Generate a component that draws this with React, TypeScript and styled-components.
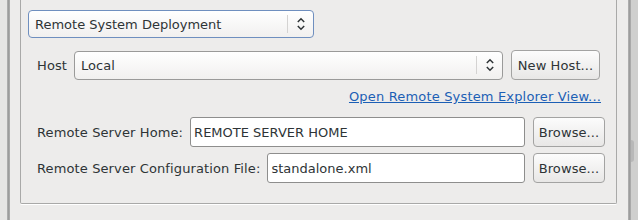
import styled, { createGlobalStyle } from "styled-components";

const GlobalStyle = createGlobalStyle`
  html, body {
    margin: 0;
    padding: 0;
    background: #edeceb;
  }
  body {
    font-family: "DejaVu Sans", "Liberation Sans", sans-serif;
    font-size: 13px;
    color: #2e3436;
  }
`;

const Chevron = () => (
  <svg width="10" height="14" viewBox="0 0 10 14">
    <path d="M1.8 5 L5 1.8 L8.2 5 M1.8 9 L5 12.2 L8.2 9" fill="none" stroke="#2e3436" strokeWidth="1.5" />
  </svg>
);

const App = () => {
  return (
    <>
      <GlobalStyle />
      <Window>
        <LeftEdge />
        <Bar />
        <Main>
          <GroupBox>
            <ModeCombo>
              <ComboText>Remote System Deployment</ComboText>
              <ComboArrow>
                <Chevron />
              </ComboArrow>
            </ModeCombo>
            <Section>
              <HostRow>
                <Label>Host</Label>
                <HostCombo>
                  <ComboText>Local</ComboText>
                  <ComboArrow>
                    <Chevron />
                  </ComboArrow>
                </HostCombo>
                <Button $width={89}>New Host...</Button>
              </HostRow>
              <LinkRow>
                <Link href="#">Open Remote System Explorer View...</Link>
              </LinkRow>
              <FieldRow>
                <Label>Remote Server Home:</Label>
                <Field>REMOTE SERVER HOME</Field>
                <Button $width={72}>Browse...</Button>
              </FieldRow>
              <FieldRow>
                <Label>Remote Server Configuration File:</Label>
                <Field>standalone.xml</Field>
                <Button $width={72}>Browse...</Button>
              </FieldRow>
            </Section>
          </GroupBox>
        </Main>
        <Bar />
        <RightEdge>
          <Slider />
        </RightEdge>
      </Window>
    </>
  );
};

const Window = styled.div`
  display: flex;
  width: 638px;
  height: 220px;
  overflow: hidden;
`;

const LeftEdge = styled.div`
  width: 7px;
  background: #e6e5e4;
`;

const Bar = styled.div`
  width: 3px;
  background: linear-gradient(to right, #b4b4b4, #9c9c9c, #b0b0b0);
`;

const RightEdge = styled.div`
  display: flex;
  flex-direction: column;
  flex: 1;
  background: #cfcfce;
`;

const Slider = styled.div`
  margin-top: 140px;
  height: 22px;
  width: 3px;
  border-radius: 0 3px 3px 0;
  background: #b8b8b8;
`;

const Main = styled.div`
  flex: 0 0 618px;
  padding: 0 11px 0 10px;
  box-sizing: border-box;
`;

const GroupBox = styled.div`
  height: 204px;
  box-sizing: border-box;
  border: 1px solid #a9a9a8;
  border-top: none;
  border-radius: 0 0 2px 2px;
  box-shadow: 0 1px 0 #ffffff;
  padding-top: 10px;
`;

const ComboBase = styled.div`
  display: flex;
  align-items: center;
  box-sizing: border-box;
  border-radius: 4px;
  background: linear-gradient(to bottom, #ffffff, #f1f0ef);
`;

const ModeCombo = styled(ComboBase)`
  margin-left: 7px;
  width: 286px;
  height: 28px;
  border: 1px solid #6f8fbf;
`;

const HostCombo = styled(ComboBase)`
  flex: 1;
  height: 29px;
  border: 1px solid #9a9a99;
`;

const ComboText = styled.span`
  flex: 1;
  padding-left: 6px;
  white-space: nowrap;
`;

const ComboArrow = styled.span`
  display: flex;
  align-items: center;
  justify-content: center;
  width: 25px;
  height: 18px;
  border-left: 1px solid #d4d3d2;
`;

const Section = styled.div`
  padding-left: 16px;
  margin-top: 12px;
`;

const HostRow = styled.div`
  display: flex;
  align-items: center;
  gap: 6px;
  margin-right: 16px;
  height: 30px;
`;

const Label = styled.span`
  white-space: nowrap;
  margin-right: 1px;
  letter-spacing: 0.12px;
`;

const Button = styled.div<{ $width: number }>`
  display: flex;
  align-items: center;
  justify-content: center;
  width: ${(p) => p.$width}px;
  height: 30px;
  margin-left: 2px;
  box-sizing: border-box;
  border: 1px solid #a3a3a2;
  border-radius: 4px;
  background: linear-gradient(to bottom, #fcfcfc, #e8e7e6);
  white-space: nowrap;
  letter-spacing: 0.1px;
`;

const LinkRow = styled.div`
  display: flex;
  justify-content: flex-end;
  margin: 9px 15px 0 0;
  height: 18px;
`;

const Link = styled.a`
  color: #1c5fb5;
  text-decoration: underline;
  letter-spacing: 0.17px;
`;

const FieldRow = styled.div`
  display: flex;
  align-items: center;
  gap: 6px;
  margin: 10px 11px 0 0;
  height: 30px;

  & + & {
    margin-top: 6px;
  }
`;

const Field = styled.div`
  flex: 1;
  display: flex;
  align-items: center;
  height: 30px;
  box-sizing: border-box;
  padding-left: 3px;
  border: 1px solid #8e8e8d;
  border-radius: 3px;
  background: #ffffff;
  white-space: nowrap;
`;

export default App;
